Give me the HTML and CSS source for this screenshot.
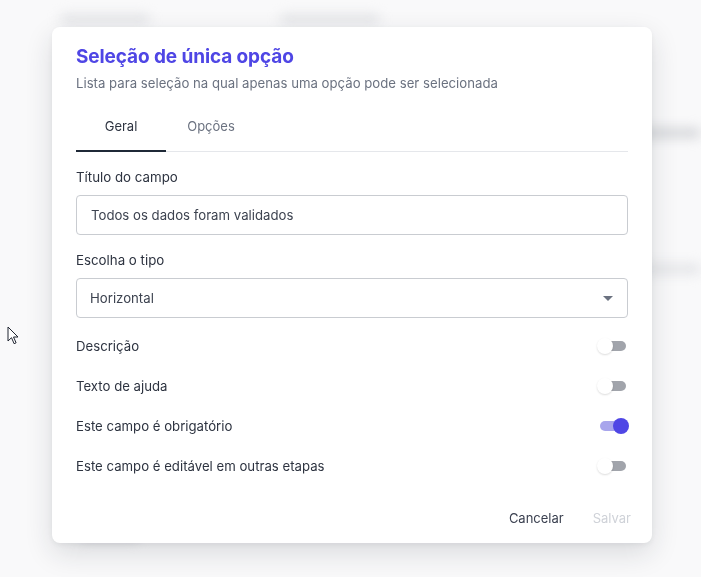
FILE: index.html
```html
<!DOCTYPE html>
<html lang="pt-BR">
<head>
  <meta charset="utf-8">
  <title>Seleção de única opção</title>
  <link rel="stylesheet" href="styles.css">
</head>
<body>
  <!-- blurred page behind the dialog -->
  <div class="backdrop">
    <div class="bg-row">
      <span class="bg-bar w90"></span>
      <span class="bg-bar w100 gap"></span>
    </div>
    <div class="bg-row right">
      <span class="bg-bar w80 dark"></span>
    </div>
    <div class="bg-row right low">
      <span class="bg-bar w60"></span>
    </div>
    <div class="bg-row bottom">
      <span class="bg-bar w60 dark"></span>
    </div>
  </div>

  <div class="modal">
    <h1 class="modal-title">Seleção de única opção</h1>
    <p class="modal-sub">Lista para seleção na qual apenas uma opção pode ser selecionada</p>

    <div class="tabs">
      <button class="tab active">Geral</button>
      <button class="tab">Opções</button>
    </div>

    <label class="field-label" for="titulo">Título do campo</label>
    <input class="field" id="titulo" type="text" value="Todos os dados foram validados">

    <label class="field-label" for="tipo">Escolha o tipo</label>
    <div class="select">
      <span>Horizontal</span>
      <svg class="caret" width="10" height="5" viewBox="0 0 10 5"><path d="M0 0h10L5 5z" fill="#6b7280"/></svg>
    </div>

    <div class="toggles">
      <div class="toggle-row">
        <span>Descrição</span>
        <span class="switch"><span class="track"></span><span class="thumb"></span></span>
      </div>
      <div class="toggle-row">
        <span>Texto de ajuda</span>
        <span class="switch"><span class="track"></span><span class="thumb"></span></span>
      </div>
      <div class="toggle-row">
        <span>Este campo é obrigatório</span>
        <span class="switch on"><span class="track"></span><span class="thumb"></span></span>
      </div>
      <div class="toggle-row">
        <span>Este campo é editável em outras etapas</span>
        <span class="switch"><span class="track"></span><span class="thumb"></span></span>
      </div>
    </div>

    <div class="actions">
      <button class="btn-text">Cancelar</button>
      <button class="btn-text disabled">Salvar</button>
    </div>
  </div>

  <svg class="cursor" width="12" height="19" viewBox="0 0 12 19">
    <path d="M1 1v14l3.5-3.3 2.6 6 2-.9-2.6-5.8H11z" fill="#fff" stroke="#1f2430" stroke-width="1" stroke-linejoin="round"/>
  </svg>
</body>
</html>
```

FILE: styles.css
```css
* {
  box-sizing: border-box;
}
html, body {
  margin: 0;
  height: 100%;
}
body {
  background: #f9f9fa;
  font-family: Inter, "Noto Sans", sans-serif;
  color: #2d3340;
  overflow: hidden;
}

/* backdrop */
.backdrop {
  height: 577px;
  filter: blur(6px);
  padding-top: 14px;
}
.bg-row {
  display: flex;
  padding-left: 60px;
  height: 16px;
}
.bg-row.right {
  justify-content: flex-end;
  padding-left: 0;
  margin-top: 98px;
}
.bg-row.right.low {
  margin-top: 120px;
}
.bg-row.bottom {
  margin-top: 250px;
  padding-left: 80px;
}
.bg-bar {
  display: block;
  height: 10px;
  border-radius: 5px;
  background: #e3e4e7;
}
.bg-bar.dark {
  background: #d4d5d9;
}
.bg-bar.gap {
  margin-left: 130px;
}
.w60 { width: 60px; }
.w80 { width: 80px; }
.w90 { width: 90px; }
.w100 { width: 100px; }

/* dialog */
.modal {
  position: fixed;
  left: 52px;
  top: 27px;
  width: 600px;
  height: 516px;
  background: #fff;
  border-radius: 8px;
  box-shadow: 0 10px 28px rgba(30, 35, 50, 0.14), 0 2px 6px rgba(30, 35, 50, 0.06);
  padding: 17px 24px 0 24px;
  display: flex;
  flex-direction: column;
}
.modal > * {
  flex-shrink: 0;
}
.modal-title {
  margin: 0;
  font-size: 19px;
  font-weight: 700;
  line-height: 26px;
  color: #4f46e5;
  letter-spacing: -0.1px;
}
.modal-sub {
  margin: 4px 0 0 0;
  font-size: 13.2px;
  line-height: 18px;
  color: #6b7280;
}

.tabs {
  display: flex;
  margin-top: 14px;
  border-bottom: 1px solid #e5e7eb;
}
.tab {
  width: 90px;
  height: 46px;
  background: none;
  border: none;
  border-bottom: 2px solid transparent;
  margin-bottom: -1px;
  font-family: inherit;
  font-size: 13px;
  color: #6b7280;
  padding: 0 0 4px 0;
}
.tab.active {
  color: #2d3340;
  border-bottom-color: #1f2937;
}

.field-label {
  display: block;
  font-size: 13.3px;
  line-height: 18px;
  color: #2d3340;
  margin-top: 16px;
}
.field,
.select {
  display: flex;
  align-items: center;
  width: 100%;
  height: 40px;
  margin-top: 9px;
  border: 1px solid #c9ccd1;
  border-radius: 4px;
  font-family: inherit;
  font-size: 13.2px;
  color: #3d4350;
  padding: 0 14px;
}
.field + .field-label {
  margin-top: 16px;
}
.select {
  justify-content: space-between;
  padding: 0 14px 0 13px;
}

.toggles {
  margin-top: 8px;
}
.toggle-row {
  display: flex;
  align-items: center;
  justify-content: space-between;
  height: 40px;
  font-size: 13.2px;
  color: #2d3340;
}
.switch {
  position: relative;
  width: 32px;
  height: 16px;
  margin-right: -1px;
}
.switch .track {
  position: absolute;
  left: 3px;
  top: 3px;
  width: 26px;
  height: 10px;
  border-radius: 5px;
  background: #a1a4ab;
}
.switch .thumb {
  position: absolute;
  left: 0;
  top: 0;
  width: 16px;
  height: 16px;
  border-radius: 50%;
  background: #fff;
  box-shadow: 0 1px 2px rgba(0, 0, 0, 0.14);
}
.switch.on .track {
  background: #a8a5ec;
}
.switch.on .thumb {
  left: 16px;
  background: #4f46e5;
  box-shadow: none;
}

.actions {
  display: flex;
  justify-content: flex-end;
  gap: 29px;
  margin-top: auto;
  height: 50px;
  padding-top: 13px;
  margin-right: -3px;
}
.btn-text {
  background: none;
  border: none;
  padding: 0;
  height: 24px;
  font-family: Inter, sans-serif;
  font-size: 13px;
  color: #3b4150;
  cursor: pointer;
}
.btn-text.disabled {
  color: #cfd2d8;
  cursor: default;
}

.cursor {
  position: fixed;
  left: 7px;
  top: 326px;
}
```
